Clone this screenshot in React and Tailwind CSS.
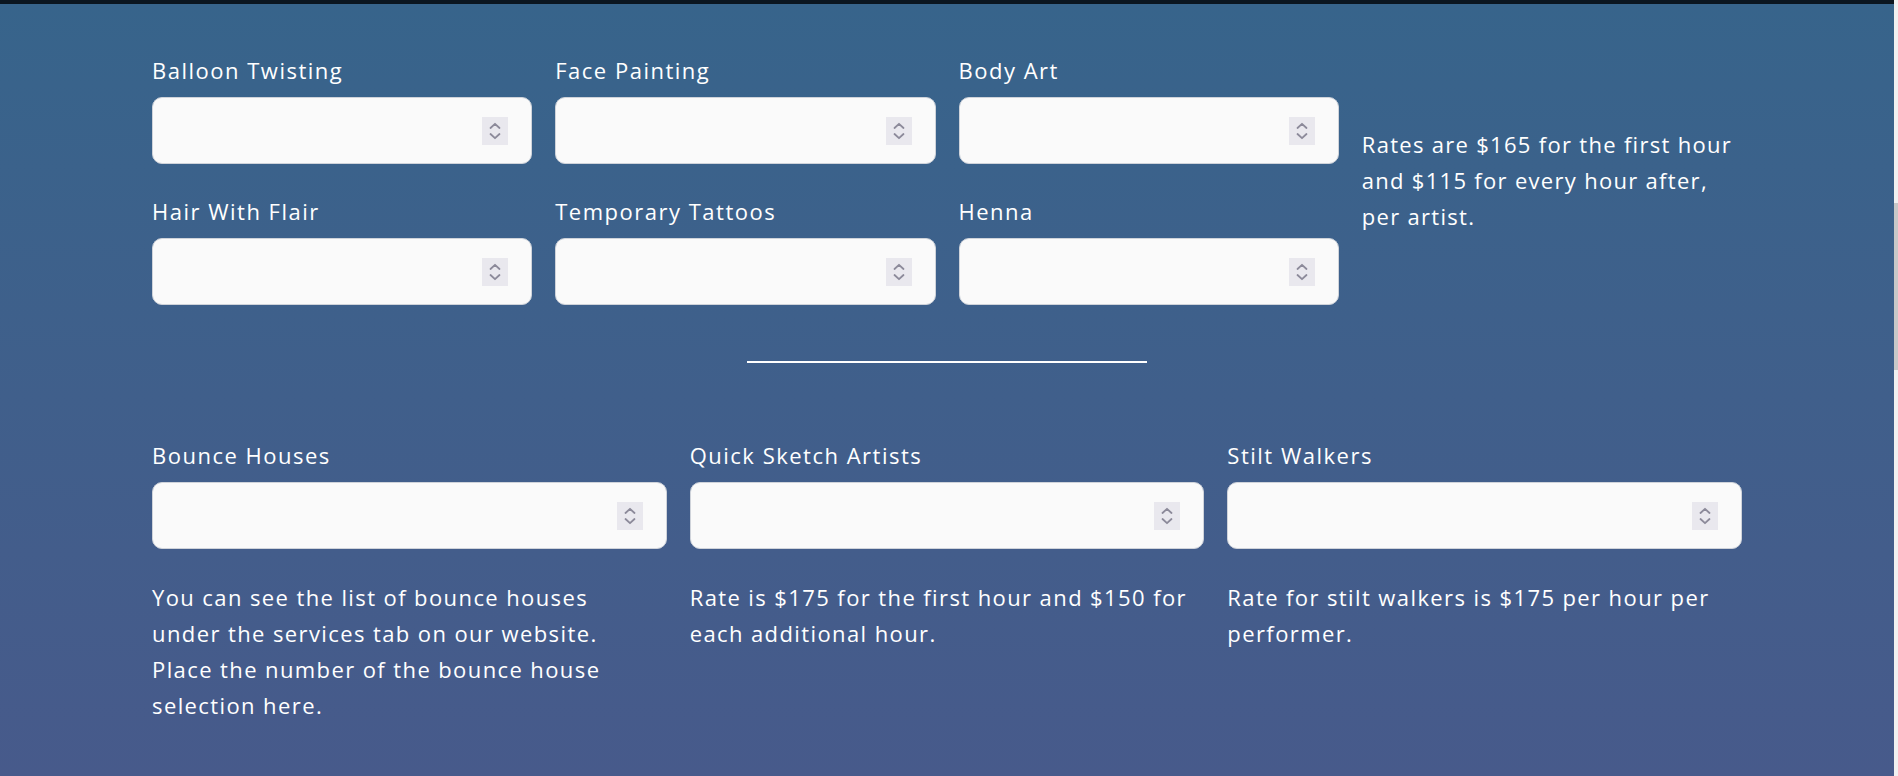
import React from 'react';

const Spinner = () => (
    <div className="w-[26px] h-[28px] bg-[#e9e8ee] flex items-center justify-center shrink-0">
        <svg width="14" height="20" viewBox="0 0 14 20" fill="none" stroke="#8c8a9a" strokeWidth="1.8" strokeLinecap="round" strokeLinejoin="round">
            <path d="M2.5 7 L7 2.8 L11.5 7" />
            <path d="M2.5 13 L7 17.2 L11.5 13" />
        </svg>
    </div>
);

const Field = ({ label }) => (
    <div className="flex flex-col">
        <label className="text-[22px] leading-[30px] tracking-[1.5px] text-white mb-[12px]">{label}</label>
        <div className="h-[67px] bg-[#fafafa] border border-[#cfd3da] rounded-[10px] flex items-center pl-4 pr-[23px]">
            <input type="text" className="flex-1 min-w-0 bg-transparent outline-none text-[20px] text-gray-800" />
            <Spinner />
        </div>
    </div>
);

const App = () => {
    return (
        <div className="h-[776px] flex overflow-hidden font-['Open_Sans',sans-serif]">
            <div className="flex-1 flex flex-col">
                <div className="h-[4px] bg-[#0b1620] shrink-0"></div>
                <main className="flex-1 bg-gradient-to-b from-[#37648b] to-[#475a8b]">
                    <div className="w-[1590px] mx-auto pt-[51px]">
                        <div className="grid grid-cols-4 gap-x-[23px]">
                            <div className="col-span-3 grid grid-cols-3 gap-x-[23px] gap-y-[32px]">
                                <Field label="Balloon Twisting" />
                                <Field label="Face Painting" />
                                <Field label="Body Art" />
                                <Field label="Hair With Flair" />
                                <Field label="Temporary Tattoos" />
                                <Field label="Henna" />
                            </div>
                            <div className="flex items-center">
                                <p className="w-[384px] shrink-0 text-[22px] leading-[36px] tracking-[1.3px] text-white">
                                    Rates are $165 for the first hour and $115 for every hour after, per artist.
                                </p>
                            </div>
                        </div>

                        <div className="flex justify-center mt-[56px] mb-[77px]">
                            <div className="w-[400px] h-[2px] bg-white"></div>
                        </div>

                        <div className="grid grid-cols-3 gap-x-[23px]">
                            <div>
                                <Field label="Bounce Houses" />
                                <p className="mt-[30px] text-[22px] leading-[36px] tracking-[1.4px] text-white pr-10">
                                    You can see the list of bounce houses under the services tab on our website. Place the number of the bounce house selection here.
                                </p>
                            </div>
                            <div>
                                <Field label="Quick Sketch Artists" />
                                <p className="mt-[30px] text-[22px] leading-[36px] tracking-[1.4px] text-white">
                                    Rate is $175 for the first hour and $150 for each additional hour.
                                </p>
                            </div>
                            <div>
                                <Field label="Stilt Walkers" />
                                <p className="mt-[30px] text-[22px] leading-[36px] tracking-[1.4px] text-white pr-6">
                                    Rate for stilt walkers is $175 per hour per performer.
                                </p>
                            </div>
                        </div>
                    </div>
                </main>
            </div>
            <div className="w-[4px] bg-[#f1f1f1] flex flex-col">
                <div className="h-[203px]"></div>
                <div className="h-[167px] bg-[#c8c8c8]"></div>
            </div>
        </div>
    );
};

export default App;
